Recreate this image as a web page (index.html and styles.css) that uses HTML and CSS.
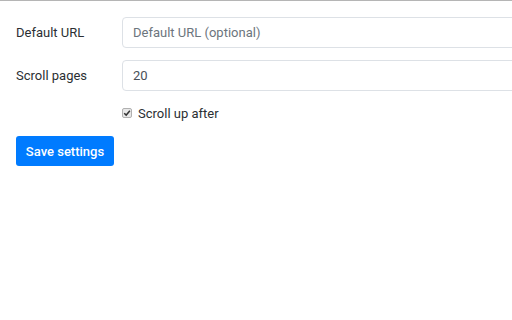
FILE: index.html
```html
<!DOCTYPE html>
<html>
<head>
<meta charset="utf-8">
<link rel="stylesheet" href="styles.css">
</head>
<body>
<form class="settings">
  <div class="row">
    <label class="label" for="url">Default URL</label>
    <input class="field" id="url" type="text" placeholder="Default URL (optional)">
  </div>
  <div class="row">
    <label class="label" for="pages">Scroll pages</label>
    <input class="field" id="pages" type="text" value="20">
  </div>
  <div class="check-row">
    <label class="check">
      <span class="box"><svg viewBox="0 0 10 10" width="8" height="8"><path d="M1.5 5.2 L4 7.6 L8.6 2.2" fill="none" stroke="#333" stroke-width="1.8"/></svg></span>
      <span>Scroll up after</span>
    </label>
  </div>
  <button type="button" class="btn">Save settings</button>
</form>
</body>
</html>
```
FILE: styles.css
```css
html, body {
  margin: 0;
  padding: 0;
  background: #fff;
}
body {
  border-top: 1px solid #b5b5b5;
  font-family: Roboto, "Noto Sans", sans-serif;
  font-size: 13px;
  color: #2b2f33;
  overflow: hidden;
  height: 319px;
}
.settings {
  padding: 16px 0 0 16px;
  display: flex;
  flex-direction: column;
  overflow: hidden;
}
.row {
  display: flex;
  align-items: center;
  margin-bottom: 12px;
}
.label {
  width: 106px;
  flex: none;
}
.field {
  flex: none;
  width: 420px;
  height: 31px;
  box-sizing: border-box;
  border: 1px solid #dde1e6;
  border-radius: 4px;
  padding: 0 10px;
  font-family: Roboto, "Noto Sans", sans-serif;
  font-size: 13px;
  color: #495057;
  outline: none;
}
.field::placeholder {
  color: #6c757d;
}
.check-row {
  padding-left: 106px;
  margin-top: -2px;
  height: 24px;
  display: flex;
  align-items: center;
}
.check {
  display: flex;
  align-items: center;
}
.box {
  box-sizing: border-box;
  width: 10px;
  height: 10px;
  margin-right: 6px;
  border: 1px solid #b0b0b0;
  border-radius: 2px;
  background: #e8e8e8;
  display: flex;
  align-items: center;
  justify-content: center;
}
.box svg {
  display: block;
}
.btn {
  margin-top: 11px;
  align-self: flex-start;
  width: 98px;
  height: 30px;
  background: #007bff;
  color: #fff;
  border: none;
  border-radius: 3px;
  font-family: Roboto, "Noto Sans", sans-serif;
  font-size: 13px;
  font-weight: 500;
  padding: 0;
}
```
